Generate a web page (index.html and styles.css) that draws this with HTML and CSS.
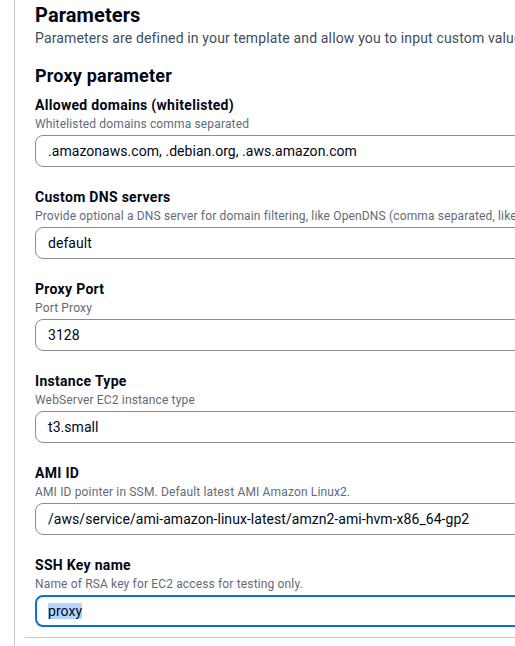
FILE: index.html
```html
<!DOCTYPE html>
<html lang="en">
<head>
<meta charset="utf-8">
<title>Parameters</title>
<link rel="stylesheet" href="styles.css">
</head>
<body>
<div class="panel">
  <div class="content">
    <header class="page-header">
      <h2 class="h2">Parameters</h2>
      <p class="header-desc">Parameters are defined in your template and allow you to input custom values when you create or update a stack.</p>
    </header>
    <section class="group">
      <h3 class="h3">Proxy parameter</h3>
      <div class="fields">
        <div class="field">
          <div class="label">Allowed domains (whitelisted)</div>
          <div class="desc">Whitelisted domains comma separated</div>
          <div class="input">.amazonaws.com, .debian.org, .aws.amazon.com</div>
        </div>
        <div class="field">
          <div class="label">Custom DNS servers</div>
          <div class="desc">Provide optional a DNS server for domain filtering, like OpenDNS (comma separated, like 208.67.222.222)</div>
          <div class="input">default</div>
        </div>
        <div class="field">
          <div class="label">Proxy Port</div>
          <div class="desc">Port Proxy</div>
          <div class="input">3128</div>
        </div>
        <div class="field">
          <div class="label">Instance Type</div>
          <div class="desc">WebServer EC2 instance type</div>
          <div class="input">t3.small</div>
        </div>
        <div class="field">
          <div class="label">AMI ID</div>
          <div class="desc">AMI ID pointer in SSM. Default latest AMI Amazon Linux2.</div>
          <div class="input">/aws/service/ami-amazon-linux-latest/amzn2-ami-hvm-x86_64-gp2</div>
        </div>
        <div class="field">
          <div class="label">SSH Key name</div>
          <div class="desc">Name of RSA key for EC2 access for testing only.</div>
          <div class="input focused"><span class="sel">proxy</span></div>
        </div>
      </div>
    </section>
  </div>
  <div class="divider"></div>
</div>
</body>
</html>
```
FILE: styles.css
```css
html, body {
  margin: 0;
  padding: 0;
  background: #ffffff;
  overflow: hidden;
}
body {
  width: 515px;
  height: 646px;
  font-family: Roboto, "Liberation Sans", sans-serif;
  color: #000716;
}
.panel {
  margin-left: 14px;
  width: 760px;
  border-left: 1px solid #c6c6cd;
  padding-top: 3px;
  min-height: 700px;
}
.content {
  padding-left: 20px;
}
.h2 {
  margin: 0;
  font-size: 20px;
  line-height: 24px;
  font-weight: 700;
  letter-spacing: 0.1px;
}
.header-desc {
  margin: 0;
  font-size: 14px;
  line-height: 22px;
  color: #414d5c;
  white-space: nowrap;
  letter-spacing: 0.15px;
}
.group {
  margin-top: 16px;
}
.h3 {
  margin: 0;
  font-size: 18px;
  line-height: 22px;
  font-weight: 700;
  letter-spacing: 0.2px;
}
.fields {
  margin-top: 7px;
  display: flex;
  flex-direction: column;
  gap: 19px;
}
.field {
  display: flex;
  flex-direction: column;
}
.label {
  font-size: 14px;
  line-height: 22px;
  font-weight: 700;
  letter-spacing: 0.3px;
}
.desc {
  font-size: 12px;
  line-height: 16px;
  color: #5f6b7a;
  white-space: nowrap;
  letter-spacing: 0.15px;
}
.input {
  margin-top: 3px;
  width: 640px;
  box-sizing: border-box;
  height: 32px;
  border: 1px solid #8c8c94;
  border-radius: 8px;
  padding: 4px 12px;
  font-size: 14px;
  line-height: 22px;
  color: #000716;
  white-space: nowrap;
  letter-spacing: 0.05px;
}
.input.focused {
  border: 2px solid #0972d3;
  padding: 3px 11px;
}
.sel {
  background: #b4d5fe;
}
.divider {
  margin: 10px 0 0 10px;
  border-top: 1px solid #c6c6cd;
}
```
